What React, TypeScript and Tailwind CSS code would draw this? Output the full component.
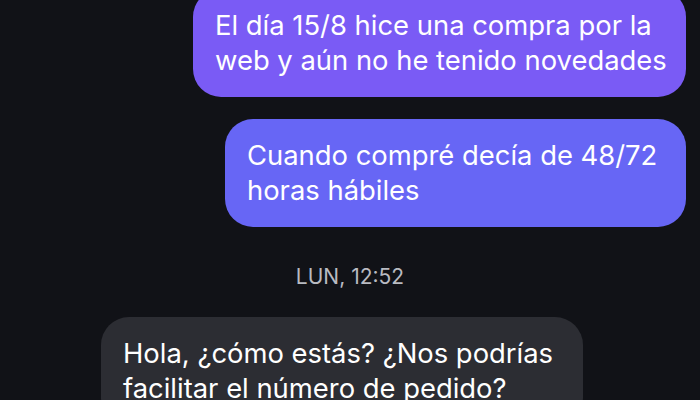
export default function App() {
  return (
    <div
      className="h-[400px] w-[700px] overflow-hidden bg-[#111217] text-[27.4px] leading-[35px] text-white"
      style={{ fontFamily: 'Inter, "Noto Sans", sans-serif' }}
    >
      <div className="flex flex-col pr-[14px]">
        <div className="mt-[-11px] flex justify-end">
          <div className="w-[493px] whitespace-nowrap rounded-[28px] bg-[#7a5bf5] px-[22px] py-[19px]">
            El día 15/8 hice una compra por la
            <br />
            web y aún no he tenido novedades
          </div>
        </div>
        <div className="mt-[22px] flex justify-end">
          <div className="w-[461px] whitespace-nowrap rounded-[28px] bg-[#6766f5] px-[22px] py-[19px]">
            Cuando compré decía de 48/72
            <br />
            horas hábiles
          </div>
        </div>
      </div>
      <div className="mt-[38px] text-center text-[21px] leading-[24px] text-[#b9bbc2]">LUN, 12:52</div>
      <div className="mt-[28px] pl-[101px]">
        <div className="w-[482px] whitespace-nowrap rounded-[28px] bg-[#2c2d33] px-[22px] py-[19px]">
          Hola, ¿cómo estás? ¿Nos podrías
          <br />
          facilitar el número de pedido?
        </div>
      </div>
    </div>
  )
}
